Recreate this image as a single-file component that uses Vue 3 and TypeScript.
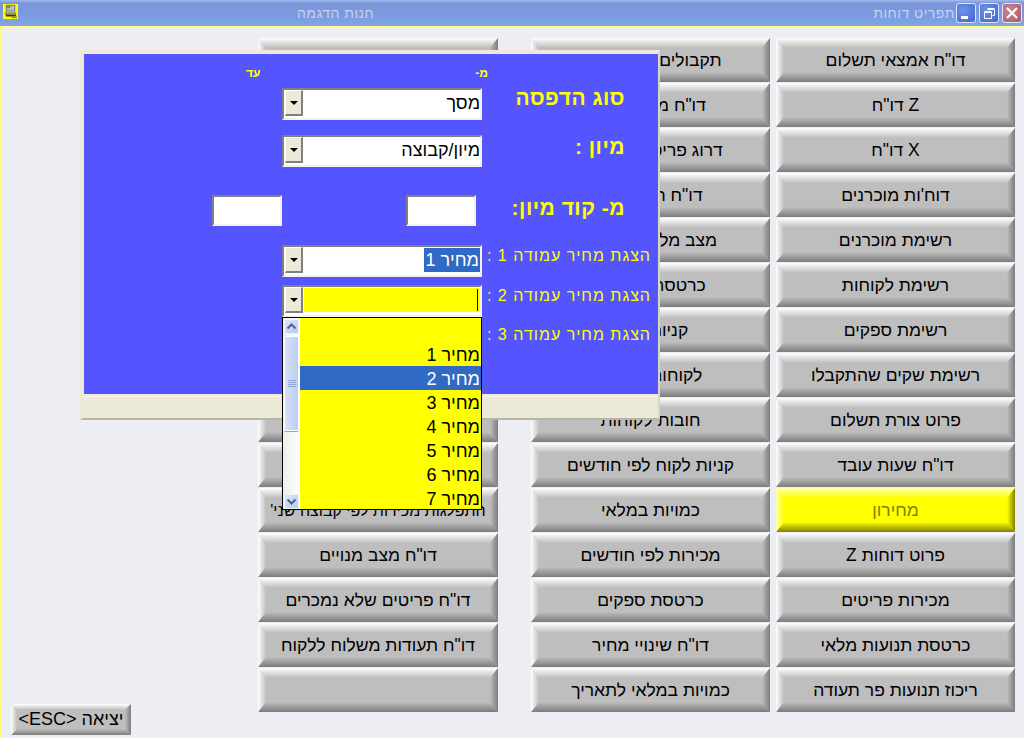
<script setup lang="ts">
interface ReportButton {
  label: string
  small?: boolean
  active?: boolean
}

const toButtons = (labels: string[]): ReportButton[] => labels.map((label) => ({ label }))

// עמודות מימין לשמאל
const columns: ReportButton[][] = [
  [
    { label: 'דו"ח אמצאי תשלום' },
    { label: 'Z דו"ח' },
    { label: 'X דו"ח' },
    { label: "דוח'ות מוכרנים" },
    { label: 'רשימת מוכרנים' },
    { label: 'רשימת לקוחות' },
    { label: 'רשימת ספקים' },
    { label: 'רשימת שקים שהתקבלו' },
    { label: 'פרוט צורת תשלום' },
    { label: 'דו"ח שעות עובד' },
    { label: 'מחירון', active: true },
    { label: 'פרוט דוחות Z' },
    { label: 'מכירות פריטים' },
    { label: 'כרטסת תנועות מלאי' },
    { label: 'ריכוז תנועות פר תעודה' }
  ],
  toButtons([
    'תקבולים לפי תאריך',
    'דו"ח מלאי חסר',
    'דרוג פריטים מכירות',
    'דו"ח חשבוניות',
    'מצב מלאי לתאריך',
    'כרטסת לקוחות',
    'קניות ספק',
    'לקוחות חייבים',
    'חובות לקוחות',
    'קניות לקוח לפי חודשים',
    'כמויות במלאי',
    'מכירות לפי חודשים',
    'כרטסת ספקים',
    'דו"ח שינויי מחיר',
    'כמויות במלאי לתאריך'
  ]),
  [
    ...toButtons(Array(10).fill('')),
    { label: "התפלגות מכירות לפי קבוצה שני'", small: true },
    { label: 'דו"ח מצב מנויים' },
    { label: 'דו"ח פריטים שלא נמכרים' },
    { label: 'דו"ח תעודות משלוח ללקוח' },
    { label: '' }
  ]
]

const priceOptions = ['', 'מחיר 1', 'מחיר 2', 'מחיר 3', 'מחיר 4', 'מחיר 5', 'מחיר 6', 'מחיר 7']
const selectedOption = 2
</script>

<template>
  <div class="window">
    <header class="titlebar">
      <svg class="app-icon" width="15" height="15" viewBox="0 0 16 18" preserveAspectRatio="none">
        <rect x="0" y="0" width="16" height="18" fill="#ffff00" />
        <rect x="3" y="1" width="10" height="8" fill="#6b6b6b" />
        <rect x="4" y="2" width="8" height="6" fill="#b8c4cc" />
        <rect x="4" y="2" width="4" height="3" fill="#7d8a6a" />
        <rect x="2" y="10" width="12" height="3" fill="#8a8a8a" />
        <rect x="3" y="13" width="11" height="2" fill="#333333" />
        <rect x="9" y="15" width="6" height="2" fill="#9a9a20" />
      </svg>
      <span class="app-title">חנות הדגמה</span>
      <span class="menu-title">תפריט דוחות</span>
      <div class="window-buttons">
        <span class="win-btn">
          <svg width="20" height="20" viewBox="0 0 20 20"><rect x="5" y="13" width="7" height="3" fill="#fff" /></svg>
        </span>
        <span class="win-btn">
          <svg width="20" height="20" viewBox="0 0 20 20" fill="none" stroke="#fff">
            <path d="M8.5 6.5h7v6h-2M8.5 5.5h7" />
            <rect x="5.5" y="9.5" width="7" height="6" />
            <path d="M5.5 8.5h7" />
          </svg>
        </span>
        <span class="win-btn close">
          <svg width="20" height="20" viewBox="0 0 20 20" stroke="#fff" stroke-width="2.2">
            <path d="M5 5l10 10M15 5l-10 10" />
          </svg>
        </span>
      </div>
    </header>

    <main class="desk">
      <div class="exit-col">
        <button class="bevel exit"><span>יציאה &lt;ESC&gt;</span></button>
      </div>

      <div class="columns">
        <div v-for="(col, c) in columns" :key="c" class="column">
          <button
            v-for="(btn, i) in col"
            :key="i"
            class="bevel"
            :class="{ active: btn.active, small: btn.small }"
          >
            <span>{{ btn.label }}</span>
          </button>
        </div>
      </div>

      <!-- דיאלוג הדפסת מחירון -->
      <section class="dialog">
        <div class="form">
          <div class="row heads">
            <span class="head-to">עד</span>
            <span class="head-from">מ-</span>
          </div>

          <div class="row first">
            <div class="combo">
              <span class="drop"><i></i></span>
              <span class="value">מסך</span>
            </div>
            <label class="big">סוג הדפסה</label>
          </div>

          <div class="row second">
            <div class="combo">
              <span class="drop"><i></i></span>
              <span class="value">מיון/קבוצה</span>
            </div>
            <label class="big">מיון :</label>
          </div>

          <div class="row third">
            <span class="field to"></span>
            <span class="field from"></span>
            <label class="big">מ- קוד מיון:</label>
          </div>

          <div class="row fourth">
            <div class="combo">
              <span class="drop"><i></i></span>
              <span class="value"><b class="picked">מחיר 1</b></span>
            </div>
            <label class="mini">הצגת מחיר עמודה 1 :</label>
          </div>

          <div class="row fifth">
            <div class="combo open">
              <span class="drop"><i></i></span>
              <span class="value editing"><em class="caret"></em></span>
              <div class="listbox">
                <div class="scrollbar">
                  <span class="arrow">
                    <svg width="15" height="15" viewBox="0 0 15 15" fill="none" stroke="#4d6185" stroke-width="2"><path d="M3.5 9.5l4-4 4 4" /></svg>
                  </span>
                  <span class="thumb">
                    <svg width="8" height="8" viewBox="0 0 8 8" stroke="#8ea6d8"><path d="M0 .5h8M0 2.5h8M0 4.5h8M0 6.5h8" /></svg>
                  </span>
                  <span class="track"></span>
                  <span class="arrow">
                    <svg width="15" height="15" viewBox="0 0 15 15" fill="none" stroke="#4d6185" stroke-width="2"><path d="M3.5 5.5l4 4 4-4" /></svg>
                  </span>
                </div>
                <ul class="options">
                  <li
                    v-for="(opt, i) in priceOptions"
                    :key="i"
                    :class="{ selected: i === selectedOption }"
                  >{{ opt }}</li>
                </ul>
              </div>
            </div>
            <label class="mini">הצגת מחיר עמודה 2 :</label>
          </div>

          <div class="row sixth">
            <label class="mini">הצגת מחיר עמודה 3 :</label>
          </div>
        </div>
        <div class="dialog-foot"></div>
      </section>
    </main>
  </div>
</template>

<style scoped>
.window {
  width: 1024px;
  height: 738px;
  display: flex;
  flex-direction: column;
  overflow: hidden;
  background: #eceef3;
  font-family: "Liberation Sans", Arial, sans-serif;
}

/* פס כותרת */
.titlebar {
  position: relative;
  height: 26px;
  flex: none;
  display: flex;
  align-items: center;
  background: linear-gradient(to bottom, #a3b9ea 0, #7b97dc 3px, #7b99de 14px, #7fa6e8 26px);
  border-bottom: 1px solid #ffff7a;
  color: #c6d2f0;
  font-size: 14px;
  letter-spacing: 0.5px;
}
.app-icon {
  margin-left: 3px;
  margin-top: -3px;
}
.app-title {
  position: absolute;
  left: 297px;
  top: 5px;
}
.menu-title {
  margin-left: auto;
  margin-right: 1px;
}
.window-buttons {
  display: flex;
  gap: 3px;
  margin-right: 2px;
}
.win-btn {
  width: 20px;
  height: 20px;
  border: 1px solid #dfe6f7;
  border-radius: 3px;
  background: radial-gradient(circle at 35% 35%, #6e92e6, #3f66d2);
  box-sizing: border-box;
  overflow: hidden;
}
.win-btn svg {
  display: block;
  margin: -1px;
}
.win-btn.close {
  background: radial-gradient(circle at 35% 35%, #c9848f, #a85a6b);
}

/* אזור הכפתורים */
.desk {
  position: relative;
  flex: 1;
  display: flex;
  border-left: 1px solid #ffff7a;
  border-bottom: 1px solid #ffff7a;
}
.exit-col {
  width: 257px;
  flex: none;
  display: flex;
  align-items: flex-end;
  padding-left: 10px;
  padding-bottom: 2px;
  box-sizing: border-box;
}
.columns {
  flex: 1;
  display: flex;
  flex-direction: row-reverse;
  padding: 11px 9px 0 0;
}
.column {
  width: 239px;
  flex: none;
  display: flex;
  flex-direction: column;
  gap: 1px;
}
.column:nth-child(2) {
  margin-left: 33px;
  margin-right: 6px;
}
.column:nth-child(3) {
  width: 240px;
}

.bevel {
  --ex: 8px;
  --ey: 10px;
  --hi: #ffffff;
  --face: #bebebe;
  --lo: #7c7c7c;
  position: relative;
  display: flex;
  align-items: center;
  justify-content: center;
  width: 100%;
  height: 44px;
  padding: 1px 0 0;
  border: 0;
  background: var(--face);
  color: #000;
  font: 17.5px "Liberation Sans", Arial, sans-serif;
  direction: rtl;
}
.bevel::before,
.bevel::after {
  content: "";
  position: absolute;
  inset: 0;
}
.bevel::before {
  background:
    linear-gradient(to bottom, var(--hi), var(--face)) top / 100% var(--ey) no-repeat,
    linear-gradient(to top, var(--lo), var(--face)) bottom / 100% var(--ey) no-repeat;
  clip-path: polygon(
    0 0, 100% 0, calc(100% - var(--ex)) var(--ey), var(--ex) var(--ey), 0 0,
    0 100%, var(--ex) calc(100% - var(--ey)), calc(100% - var(--ex)) calc(100% - var(--ey)), 100% 100%, 0 100%
  );
}
.bevel::after {
  background:
    linear-gradient(to right, var(--hi), var(--face)) left / var(--ex) 100% no-repeat,
    linear-gradient(to left, var(--lo), var(--face)) right / var(--ex) 100% no-repeat;
  clip-path: polygon(
    0 0, var(--ex) var(--ey), var(--ex) calc(100% - var(--ey)), 0 100%, 0 0,
    100% 0, calc(100% - var(--ex)) var(--ey), calc(100% - var(--ex)) calc(100% - var(--ey)), 100% 100%, 100% 0
  );
}
.bevel span {
  position: relative;
  z-index: 1;
  white-space: nowrap;
}
.bevel.small {
  font-size: 16px;
}
.bevel.active {
  --hi: #ffffb0;
  --face: #ffff00;
  --lo: #808000;
  color: #808000;
}
.bevel.exit {
  --ex: 6px;
  --ey: 6px;
  width: 120px;
  height: 31px;
  font-size: 18px;
  padding: 0;
}

/* דיאלוג */
.dialog {
  position: absolute;
  z-index: 10;
  left: 79px;
  top: 23px;
  width: 580px;
  height: 370px;
  box-sizing: border-box;
  display: flex;
  flex-direction: column;
  background: #ece9d8;
  border: 3px solid #ece9d8;
  border-right: 2px solid #d8d5c4;
  border-bottom: 2px solid #b8b5a4;
  padding: 1px 0 0 1px;
}
.form {
  height: 340px;
  background: #5555ff;
  box-sizing: border-box;
}
.dialog-foot {
  flex: 1;
  margin-top: 2px;
  border-top: 1px solid #f8f6ea;
}
.row {
  display: grid;
  grid-template-columns: 128px 70px 200px 1fr;
  align-items: center;
  color: #ffff00;
}
.row .combo,
.row .from {
  grid-column: 3;
}
.row > label {
  grid-column: 4;
}
.heads {
  height: 34px;
  font-size: 12px;
  font-weight: bold;
  padding-top: 4px;
  box-sizing: border-box;
}
.heads span {
  direction: rtl;
}
.head-to {
  grid-column: 2;
  justify-self: start;
  margin-left: 34px;
}
.head-from {
  grid-column: 3;
  justify-self: end;
  margin-right: -6px;
}
.first { height: 32px; }
.second { margin-top: 15px; height: 32px; }
.third { margin-top: 28px; height: 31px; }
.fourth { margin-top: 19px; height: 32px; }
.fifth { margin-top: 8px; height: 32px; }
.sixth { margin-top: 8px; height: 20px; }

.big {
  direction: rtl;
  font-size: 21px;
  font-weight: bold;
  letter-spacing: 0.5px;
  text-align: right;
  padding-right: 33px;
  white-space: nowrap;
}
.first .big { margin-top: -13px; }
.second .big { margin-top: -8px; }
.third .big { margin-top: -6px; }
.mini {
  direction: rtl;
  font-size: 16px;
  letter-spacing: 1px;
  text-align: right;
  padding-right: 7px;
  white-space: nowrap;
  margin-top: -10px;
}
.fifth .mini { margin-top: -11px; }
.sixth .mini { margin-top: 0; }

.field {
  display: block;
  height: 31px;
  width: 70px;
  box-sizing: border-box;
  background: #fff;
  border: 2px solid;
  border-color: #808080 #f5f3e8 #f5f3e8 #808080;
}
.field.to {
  grid-column: 2;
}
.field.from {
  margin-left: 124px;
}

.combo {
  position: relative;
  width: 200px;
  height: 32px;
  box-sizing: border-box;
  display: flex;
  background: #fff;
  border: 2px solid;
  border-color: #808080 #f5f3e8 #f5f3e8 #808080;
}
.drop {
  flex: none;
  width: 18px;
  margin: 0 0 2px 1px;
  box-sizing: border-box;
  display: flex;
  align-items: center;
  justify-content: center;
  background: #ece9d8;
  border: 1px solid;
  border-width: 1px 2px 2px 1px;
  border-color: #fff #808080 #808080 #fff;
}
.drop i {
  width: 0;
  height: 0;
  border: 4px solid transparent;
  border-top: 4px solid #000;
  border-bottom: 0;
}
.value {
  flex: 1;
  direction: rtl;
  display: flex;
  align-items: center;
  color: #000;
  font-size: 18px;
  line-height: 24px;
  padding-bottom: 3px;
}
.picked {
  font-weight: normal;
  background: #316ac5;
  color: #fff;
  padding: 0 1px;
}
.editing {
  background: #ffff00;
  margin: 1px 0 3px 1px;
  padding: 0;
}
.caret {
  display: block;
  width: 1px;
  height: 22px;
  background: #0000c0;
  margin-right: 2px;
}

.listbox {
  position: absolute;
  left: -2px;
  top: 30px;
  z-index: 5;
  width: 200px;
  height: 193px;
  box-sizing: border-box;
  display: flex;
  background: #ffff00;
  border: 1px solid #000;
}
.scrollbar {
  flex: none;
  width: 17px;
  display: flex;
  flex-direction: column;
  align-items: center;
  background: linear-gradient(to right, #f0efe8, #fdfdfb);
  padding: 1px 1px 0;
  box-sizing: border-box;
}
.arrow {
  width: 15px;
  height: 15px;
  flex: none;
  border-radius: 2px;
  background: linear-gradient(135deg, #e0e9fc, #b4c8f4);
  box-shadow: inset 0 0 0 1px #eef3fd;
}
.arrow svg {
  display: block;
}
.thumb {
  width: 15px;
  height: 95px;
  flex: none;
  margin-top: 2px;
  box-sizing: border-box;
  border: 1px solid #fff;
  border-radius: 2px;
  background: linear-gradient(to right, #d6e1fa, #bccdf6);
  box-shadow: 0 1px 0 #8ea6d8;
  display: flex;
  align-items: center;
  justify-content: center;
}
.thumb svg {
  display: block;
}
.track {
  flex: 1;
}
.options {
  flex: 1;
  list-style: none;
  margin: 0;
  padding: 0;
  direction: rtl;
  color: #000;
  font-size: 18px;
}
.options li {
  height: 24px;
  line-height: 26px;
  padding-right: 1px;
}
.options li.selected {
  background: #316ac5;
  color: #fff;
}
</style>

<style>
html, body {
  margin: 0;
  padding: 0;
}
</style>
